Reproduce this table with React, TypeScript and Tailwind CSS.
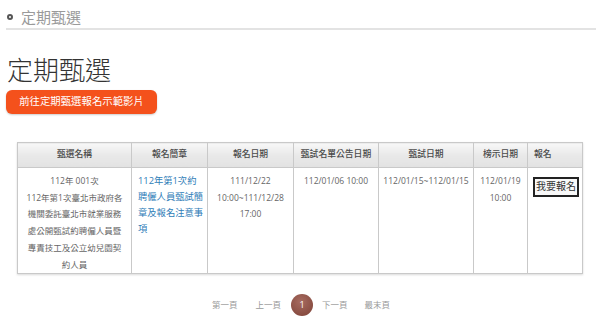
import React from "react";

const font = { fontFamily: '"Open Sans", "Noto Sans CJK TC", sans-serif' };

export default function App() {
  const th = "border border-[#c9c9c9] bg-gradient-to-b from-[#f7f7f7] via-[#e9e9e9] to-[#e2e2e2] h-[25px] text-[8.8px] text-[#4a4a4a] font-medium p-0";
  const td = "border border-[#c9c9c9] align-top text-center text-[8.5px] leading-[16.7px] text-[#666] pt-[5px] px-[3px]";
  return (
    <div className="w-[600px] h-[335px] bg-white overflow-hidden" style={font}>
      {/* breadcrumb */}
      <div className="flex items-center h-[30px] ml-[6px] mr-[4px] border-b-2 border-[#e3e3e3] pt-[6px]">
        <span className="w-[6px] h-[6px] rounded-full border-2 border-[#555] ml-[1px] mr-[8px]" />
        <span className="text-[15px] leading-none text-[#9a9a9a]">定期甄選</span>
      </div>
      {/* title */}
      <div className="ml-[7px] mt-[25px] text-[26px] leading-[30px] font-light text-[#333]">定期甄選</div>
      <div className="ml-[6px] mt-[5px] w-[151px] h-[24px] rounded-[6px] bg-[#f4511c] shadow-[0_1px_2px_rgba(0,0,0,0.2)] flex items-center justify-center text-white text-[10.4px]">
        前往定期甄選報名示範影片
      </div>
      {/* table */}
      <table className="ml-[17px] mt-[28px] border-collapse table-fixed w-[565px] shadow-[0_1px_2px_rgba(0,0,0,0.15)]">
        <colgroup>
          <col className="w-[114px]" />
          <col className="w-[76px]" />
          <col className="w-[86px]" />
          <col className="w-[85px]" />
          <col className="w-[95px]" />
          <col className="w-[54px]" />
          <col className="w-[55px]" />
        </colgroup>
        <thead>
          <tr>
            <th className={th}>甄選名稱</th>
            <th className={th}>報名簡章</th>
            <th className={th}>報名日期</th>
            <th className={th}>甄試名單公告日期</th>
            <th className={th}>甄試日期</th>
            <th className={th}>榜示日期</th>
            <th className={th + " text-left pl-[6px]"}>報名</th>
          </tr>
        </thead>
        <tbody>
          <tr className="h-[106px]">
            <td className={td + " px-[8px]"}>
              112年 001次
              <br />
              112年第1次臺北市政府各機關委託臺北市就業服務處公開甄試約聘僱人員暨專責技工及公立幼兒園契約人員
            </td>
            <td className="border border-[#c9c9c9] align-top text-left text-[9.3px] leading-[16px] text-[#2f7db8] pt-[5px] pl-[6px] pr-[2px]">
              112年第1次約聘僱人員甄試簡章及報名注意事項
            </td>
            <td className={td}>
              111/12/22
              <br />
              10:00~111/12/28
              <br />
              17:00
            </td>
            <td className={td}>112/01/06 10:00</td>
            <td className={td}>112/01/15~112/01/15</td>
            <td className={td}>
              112/01/19
              <br />
              10:00
            </td>
            <td className="border border-[#c9c9c9] align-top pt-[4px] pl-[5px]">
              <span className="inline-block whitespace-nowrap border-2 border-[#222] bg-[#f8f8f8] text-[10px] leading-[15px] px-[1px] py-[0.5px] text-[#333]">
                我要報名
              </span>
            </td>
          </tr>
        </tbody>
      </table>
      {/* pagination */}
      <div className="flex items-center mt-[20px] ml-[212px] text-[8.5px] text-[#999]">
        <span>第一頁</span>
        <span className="ml-[18px]">上一頁</span>
        <span className="ml-[10px] w-[22px] h-[22px] rounded-full bg-[radial-gradient(circle_at_45%_35%,#a76b60,#7d4136)] text-white text-[9px] flex items-center justify-center">
          1
        </span>
        <span className="ml-[9px]">下一頁</span>
        <span className="ml-[17px]">最末頁</span>
      </div>
    </div>
  );
}
